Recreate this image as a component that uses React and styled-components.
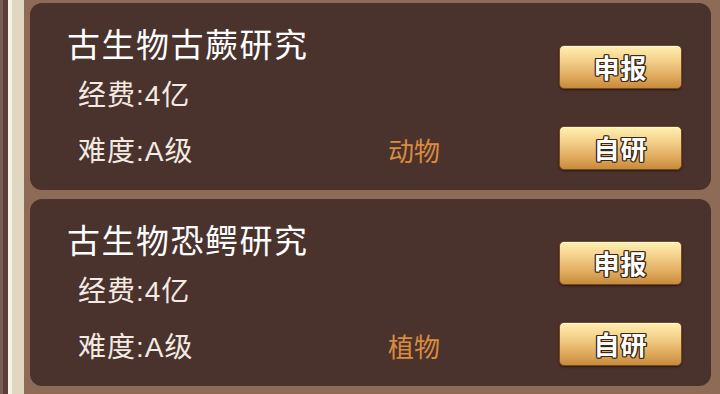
import styled, { createGlobalStyle } from "styled-components"

// Research project list: two cards with cost / difficulty and two action buttons.

const GlobalStyle = createGlobalStyle`
    html, body {
        margin: 0;
        padding: 0;
        background-color: #8d6b57;
        font-family: "Noto Sans CJK SC", "Noto Sans", sans-serif;
    }
`

const Page = styled.div`
    display: flex;
    width: 720px;
    height: 394px;
    overflow: hidden;
    background-color: #8d6b57;
`

const Rail = styled.div`
    flex: 0 0 24px;
    display: flex;
`

const Stripe = styled.div`
    width: ${p => p.w}px;
    background-color: ${p => p.color};
`

const List = styled.div`
    flex: 1;
    display: flex;
    flex-direction: column;
    gap: 9px;
    padding: 3px 9px 0 6px;
`

const Card = styled.div`
    display: flex;
    height: 187px;
    box-sizing: border-box;
    background-color: #4a322d;
    border-radius: 12px;
    padding: 20px 29px 0 37px;
`

const Info = styled.div`
    flex: 1;
    display: flex;
    flex-direction: column;
`

const Title = styled.div`
    color: #ffffff;
    font-size: 33px;
    line-height: 40px;
    letter-spacing: 1.5px;
`

const Line = styled.div`
    color: #f3ebe3;
    font-family: "Liberation Sans", "Noto Sans CJK SC", sans-serif;
    font-size: 28px;
    line-height: 30px;
    letter-spacing: 1px;
    padding-left: 11px;
    margin-top: ${p => p.top}px;
    display: grid;
    grid-template-columns: 310px auto;
`

const Tag = styled.span`
    color: #d98c3f;
    font-size: 26px;
    letter-spacing: 0;
`

const Actions = styled.div`
    display: flex;
    flex-direction: column;
    gap: 37px;
    padding-top: 22px;
`

const GoldButton = styled.button`
    width: 123px;
    height: 44px;
    border: 1px solid #7a4a1c;
    border-radius: 5px;
    background: linear-gradient(to bottom, #fff0b0 0%, #f4d08a 35%, #dda75a 75%, #c78a3c 100%);
    box-shadow: inset 0 1px 0 rgba(255, 255, 255, 0.7), 0 1px 2px rgba(0, 0, 0, 0.5);
    color: #ffffff;
    font-family: "Noto Sans CJK SC", sans-serif;
    font-weight: 700;
    font-size: 26px;
    line-height: 1;
    letter-spacing: 1px;
    padding: 0;
    cursor: pointer;
    text-shadow:
        -1.2px 0 0 #3b2514, 1.2px 0 0 #3b2514,
        0 -1.2px 0 #3b2514, 0 1.2px 0 #3b2514,
        -1px -1px 0 #3b2514, 1px -1px 0 #3b2514,
        -1px 1px 0 #3b2514, 1px 1px 0 #3b2514;
`

const projects = [
    { name: "古生物古蕨研究", cost: "4亿", level: "A级", kind: "动物" },
    { name: "古生物恐鳄研究", cost: "4亿", level: "A级", kind: "植物" },
]

const App = () => {
    return (
        <Page>
            <GlobalStyle />
            <Rail>
                <Stripe w={3} color="#7a5c55" />
                <Stripe w={5} color="#573e39" />
                <Stripe w={4} color="#f6f0e5" />
                <Stripe w={12} color="#e3d6c1" />
            </Rail>
            <List>
                {projects.map(p => (
                    <Card key={p.name}>
                        <Info>
                            <Title>{p.name}</Title>
                            <Line top={18}>经费:{p.cost}</Line>
                            <Line top={26}>
                                <span>难度:{p.level}</span>
                                <Tag>{p.kind}</Tag>
                            </Line>
                        </Info>
                        <Actions>
                            <GoldButton>申报</GoldButton>
                            <GoldButton>自研</GoldButton>
                        </Actions>
                    </Card>
                ))}
            </List>
        </Page>
    )
}

export default App
